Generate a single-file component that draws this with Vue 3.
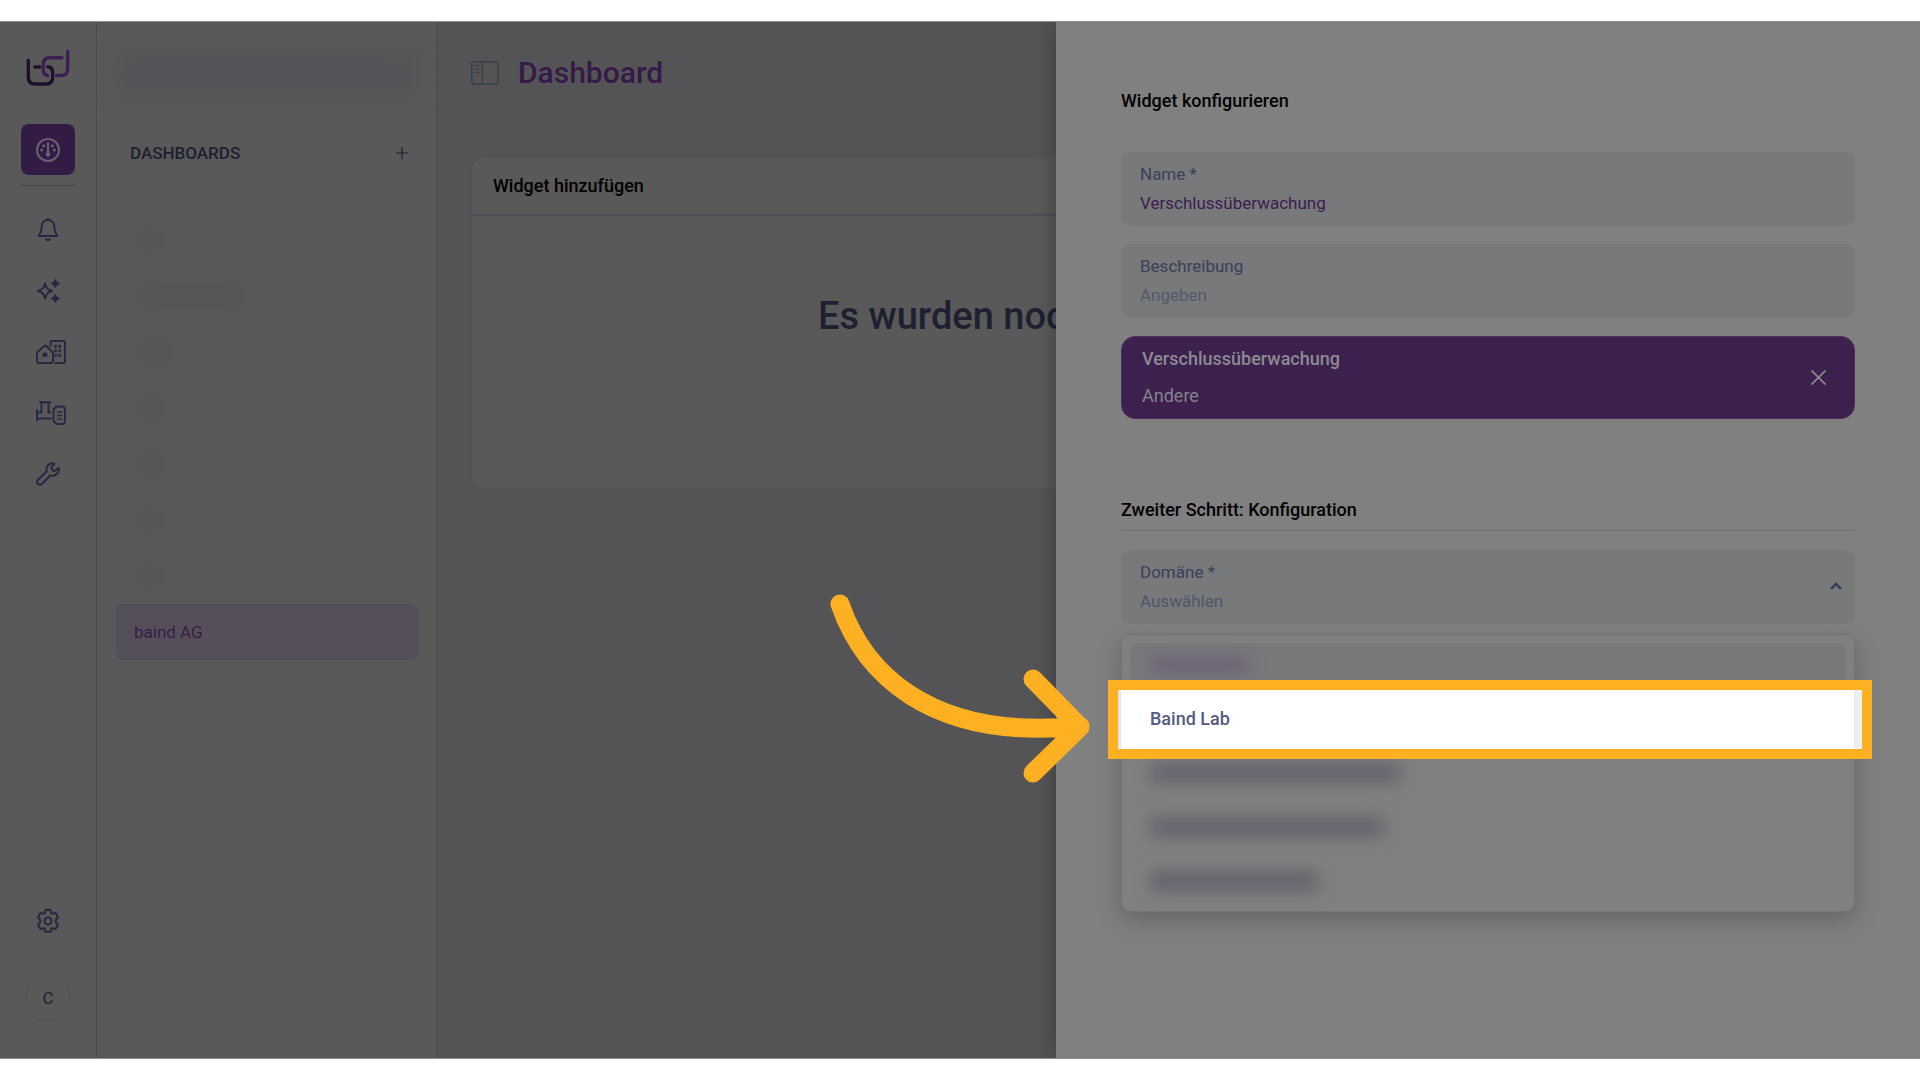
<script setup>
import { ref } from 'vue'

const name = ref('Verschlussüberwachung')
const description = ref('')
const domain = ref('')

const hiddenDashboards = [28, 110, 38, 30, 30, 28, 28]
const hiddenDomains = [250, 234, 168]
</script>

<template>
  <div class="page">
    <div class="stage">
      <nav class="rail" aria-label="Hauptnavigation">
        <a class="logo" href="#" aria-label="Startseite">
          <svg width="44" height="37" viewBox="0 0 44 37" fill="none" stroke-width="3.400" stroke-linecap="round">
            <path d="M36 8.800H24q-6.700 0-6.700 6.700v5q0 5 4.200 6M30.500 26.500H35q6.700 0 6.700-6.700V2.500" stroke="#3a1f50" />
            <path d="M2.300 11.500V28q0 7 7 7h10.200q7.200 0 7.200-7v-4.500q0-5.300-5-5.700M8.700 18h5" stroke="#1e0f2a" />
          </svg>
        </a>
        <button class="rail-btn active" type="button" aria-label="Dashboard">
          <svg width="24" height="24" viewBox="0 0 24 24" fill="none" stroke="currentColor">
            <circle cx="12" cy="12" r="11" stroke-width="2" />
            <path d="M12 5v10" stroke-width="2.200" stroke-linecap="round" />
            <circle cx="12" cy="16.500" r="2.300" fill="currentColor" stroke="none" />
            <g fill="currentColor" stroke="none">
              <circle cx="7.700" cy="7.700" r="1.500" /><circle cx="16.300" cy="7.700" r="1.500" />
              <circle cx="5.700" cy="12" r="1.500" /><circle cx="18.300" cy="12" r="1.500" />
            </g>
          </svg>
        </button>
        <hr class="rail-line" />
        <div class="rail-list">
          <button class="rail-btn" type="button" aria-label="Alarme">
            <svg width="24" height="24" viewBox="0 0 24 24" fill="none" stroke="currentColor" stroke-width="1.900" stroke-linejoin="round" stroke-linecap="round">
              <path d="M12 2c-4 0-6.300 3-6.300 6.500 0 5-1.700 7.300-3 9.500h18.600c-1.300-2.200-3-4.500-3-9.500C18.300 5 16 2 12 2zM12 1v1" />
              <path d="M9.200 21h5.600q-.800 2-2.800 2t-2.800-2z" fill="currentColor" stroke-width=".5" />
            </svg>
          </button>
          <button class="rail-btn" type="button" aria-label="Assistent">
            <svg width="24" height="24" viewBox="0 0 24 24" fill="currentColor">
              <path d="M9 4.500c1 4.500 2.500 6 7 7.500-4.500 1.500-6 3-7 7.500-1-4.500-2.500-6-7-7.500 4.500-1.500 6-3 7-7.500z" fill="none" stroke="currentColor" stroke-width="2" stroke-linejoin="round" />
              <path d="M19.300 0q.9 3.300 4.500 4.500-3.600 1.200-4.500 4.500-.9-3.300-4.500-4.500 3.600-1.200 4.500-4.500zM19.300 15q.9 3.300 4.500 4.500-3.600 1.200-4.500 4.500-.9-3.300-4.500-4.500 3.600-1.200 4.500-4.500z" stroke="currentColor" stroke-width=".6" />
            </svg>
          </button>
          <button class="rail-btn wide" type="button" aria-label="Gebäude">
            <svg width="30" height="24" viewBox="0 0 30 24" fill="none" stroke="currentColor" stroke-width="1.900" stroke-linejoin="round" stroke-linecap="round">
              <path d="M1 12.500l7.500-6.800q.8-.600 1.600 0l6.900 6.800V21q0 2-2 2H3q-2 0-2-2zM14.500 6V3q0-2 2-2H27q2 0 2 2v18q0 2-2 2h-7.500" />
              <path d="M7 13h4v3.500H7z" fill="currentColor" stroke-width=".5" />
              <path d="M19.500 6.200v.1M23.700 6.200v.1M19.500 10.800v.1M23.700 10.800v.1M19.800 15.300v.1M23.700 15.300v.1" stroke-width="2.800" stroke-linecap="square" />
            </svg>
          </button>
          <button class="rail-btn wide" type="button" aria-label="Anlagen">
            <svg width="30" height="24" viewBox="0 0 30 24" fill="none" stroke="currentColor" stroke-width="1.900" stroke-linejoin="round" stroke-linecap="round">
              <path d="M1 9v10.500M1 11.500h4.500V1.200M4 1.200h10.500M12.500 1.200V11.500h2M1 17.500h14" />
              <path d="M20.500 5.500H26q3 0 3 3V20q0 3-3 3h-5.500l-3-3V8.500z" />
              <path d="M21.500 11h4M21.500 14.500h4M21.500 18h4" stroke-width="1.400" />
            </svg>
          </button>
          <button class="rail-btn" type="button" aria-label="Werkzeuge">
            <svg width="24" height="24" viewBox="0 0 24 24" fill="none" stroke="currentColor" stroke-width="2" stroke-linejoin="round" stroke-linecap="round">
              <path d="M18.500 1.700C14 .2 9.700 3.500 10.600 8.400q.1.900-.6 1.600L1.800 18q-1.500 2 0 3.800 2 1.800 4 .2l7.700-7.800q.8-.8 1.700-.6C20.500 14.300 24 10 22.600 5.700l-3.200 3q-1.200.8-3-.8-1.500-1.700-.7-3z" />
            </svg>
          </button>
        </div>
        <div class="rail-foot">
          <button class="rail-btn" type="button" aria-label="Einstellungen">
            <svg width="24" height="24" viewBox="0 0 24 24" fill="none" stroke="currentColor" stroke-width="2" stroke-linejoin="round">
              <circle cx="12" cy="12" r="3.500" />
              <path d="M9 2.200q.2-1.200 1.500-1.200h3q1.300 0 1.500 1.200l.3 2 1 .6 2-.7q1.200-.4 1.800.7l1.500 2.600q.6 1.100-.3 1.900L19.800 10.600v2.800l1.500 1.300q.9.800.3 1.900l-1.500 2.600q-.6 1.100-1.800.7l-2-.7-1 .6-.3 2Q14.800 23 13.500 23h-3Q9.200 23 9 21.800l-.3-2-1-.6-2 .7q-1.200.4-1.800-.7l-1.500-2.600q-.6-1.100.3-1.900l1.500-1.300v-2.800L2.700 9.300q-.9-.8-.3-1.900l1.500-2.600q.6-1.100 1.800-.7l2 .7 1-.6z" />
            </svg>
          </button>
          <button class="avatar" type="button">C</button>
        </div>
      </nav>

      <aside class="panel">
        <div class="search-blur"></div>
        <header class="panel-head">
          <h2>DASHBOARDS</h2>
          <button class="add" type="button" aria-label="Dashboard hinzufügen">
            <svg width="12" height="12" viewBox="0 0 12 12" stroke="currentColor" stroke-width="1.200"><path d="M6 0v12M0 6h12" /></svg>
          </button>
        </header>
        <ul class="dash-list">
          <li v-for="(w, i) in hiddenDashboards" :key="i"><span class="smudge" :style="{ width: w + 'px' }"></span></li>
          <li><a class="current" href="#">baind AG</a></li>
        </ul>
      </aside>

      <main class="main">
        <header class="main-head">
          <svg width="28" height="24" viewBox="0 0 28 24" fill="none" stroke="#3a414b" stroke-width="1.600">
            <rect x=".8" y=".8" width="26.400" height="22.400" rx="2" />
            <path d="M11.300 1v22M3.500 4.500h5M3.500 8h5M3.500 11.500h5" />
          </svg>
          <h1>Dashboard</h1>
        </header>
        <section class="card">
          <h3>Widget hinzufügen</h3>
          <p>Es wurden noch</p>
        </section>
      </main>

      <form class="drawer" @submit.prevent>
        <h2>Widget konfigurieren</h2>
        <div class="fields">
          <div class="field">
            <label for="name">Name *</label>
            <input id="name" v-model="name" type="text" />
          </div>
          <div class="field">
            <label for="desc">Beschreibung</label>
            <input id="desc" v-model="description" type="text" placeholder="Angeben" />
          </div>
          <div class="choice">
            <div>
              <strong>Verschlussüberwachung</strong>
              <span>Andere</span>
            </div>
            <button type="button" aria-label="Auswahl entfernen">
              <svg width="15" height="15" viewBox="0 0 15 15" stroke="currentColor" stroke-width="1.700"><path d="M.5.5l14 14M14.500.5l-14 14" /></svg>
            </button>
          </div>
        </div>
        <h2 class="step">Zweiter Schritt: Konfiguration</h2>
        <div class="field domain">
          <label for="domain">Domäne *</label>
          <select id="domain" v-model="domain">
            <option value="">Auswählen</option>
            <option value="lab">Baind Lab</option>
          </select>
          <svg class="chevron" width="12" height="8" viewBox="0 0 12 8" fill="none" stroke="#353b52" stroke-width="2.400"><path d="M1 7l5-5 5 5" /></svg>
        </div>
        <ul class="menu" role="listbox" aria-label="Domäne">
          <li class="option hovered"><span class="smudge pink"></span></li>
          <li class="option spot">
            <div class="frame"></div>
            <button type="button" @click="domain = 'lab'">Baind Lab</button>
            <svg class="arrow" width="270" height="200" viewBox="0 0 270 200" fill="none" stroke="#feb023" stroke-width="19" stroke-linecap="round" stroke-linejoin="round">
              <path d="M20 14C42 78 105 152 260 136M213 89l47 48-47 46" />
            </svg>
          </li>
          <li v-for="(w, i) in hiddenDomains" :key="i" class="option"><span class="smudge dark" :style="{ width: w + 'px' }"></span></li>
        </ul>
      </form>
    </div>
  </div>
</template>

<style>
body {
  margin: 0;
  background: #fff;
}
</style>

<style scoped>
* {
  box-sizing: border-box;
}
.page {
  display: flex;
  min-height: 100vh;
  padding: 21px 0;
  font-family: Roboto, "Liberation Sans", sans-serif;
  font-size: 17px;
  line-height: 20px;
}
.stage {
  position: relative;
  display: flex;
  flex: 1;
  overflow: hidden;
  border: solid #8c8c8c;
  border-width: 1px 0;
  background: #545456;
}
h1, h2, h3, p, ul {
  margin: 0;
  padding: 0;
}
h1, h2, h3, .card p {
  font-weight: 500;
}
ul {
  list-style: none;
}
button, input, select {
  padding: 0;
  border: 0;
  background: none;
  font: inherit;
  color: inherit;
}
svg {
  display: block;
}

.rail {
  display: flex;
  flex-direction: column;
  width: 97px;
  padding: 27px 21px 37px;
  border-right: 1px solid #4c4b55;
  background: #595959;
  color: #252840;
}
.logo {
  margin: 0 5px 38px;
}
.rail-btn {
  display: flex;
  align-items: center;
  justify-content: center;
  width: 54px;
  height: 40px;
}
.rail-btn.wide {
  justify-content: flex-start;
  padding-left: 15px;
}
.rail-btn.active {
  height: 51px;
  border-radius: 8px;
  background: #331c44;
  color: #6a6070;
}
.rail-line {
  width: 54px;
  height: 1px;
  margin: 10px 0 24px;
  border: 0;
  background: #49494b;
}
.rail-list {
  display: grid;
  gap: 21px;
}
.rail-list .rail-btn {
  height: 40px;
}
.rail-foot {
  display: flex;
  flex-direction: column;
  gap: 34px;
  margin-top: auto;
}
.avatar {
  width: 46px;
  height: 46px;
  margin-left: 4px;
  border: 1px solid #525254;
  border-radius: 50%;
  color: #1e2030;
}

.panel {
  width: 341px;
  padding: 29px 17px 0 19px;
  border-right: 2px solid #4e4e54;
  background: #595959;
}
.search-blur {
  height: 46px;
  border-radius: 12px;
  background: #525457;
  filter: blur(10px);
}
.panel-head {
  display: flex;
  align-items: center;
  justify-content: space-between;
  margin: 45px 11px 48px 14px;
  color: #1d2030;
}
.panel-head h2 {
  font-size: 17px;
  line-height: 22px;
}
.dash-list li {
  display: flex;
  align-items: center;
  height: 56px;
  padding-left: 20px;
}
.dash-list li:last-child {
  padding: 0;
}
.smudge {
  height: 16px;
  border-radius: 6px;
  background: #525356;
  filter: blur(8px);
}
.current {
  flex: 1;
  padding: 18px;
  border-radius: 8px;
  background: #544f58;
  color: #3a1c4c;
  text-decoration: none;
}

.main {
  flex: 1;
  padding: 30px 34px 30px 33px;
}
.main-head {
  display: flex;
  align-items: center;
  gap: 19px;
  height: 41px;
}
.main-head h1 {
  font-size: 30px;
  line-height: 40px;
  color: #351a48;
}
.card {
  height: 332px;
  margin-top: 64px;
  border: 1px solid #525256;
  border-radius: 12px;
  background: #595959;
}
.card h3 {
  padding: 18px 21px 18px;
  border-bottom: 2px solid #4d4d53;
  font-size: 18px;
  color: #000;
}
.card p {
  padding: 77px 0 0 346px;
  font-size: 38px;
  line-height: 46px;
  color: #1d2030;
}

.drawer {
  position: absolute;
  inset: 0 0 0 auto;
  width: 45%;
  padding: 67px 65px 0;
  background: #808080;
  box-shadow: 0 0 20px rgba(0, 0, 0, 0.3);
}
.drawer h2 {
  font-size: 18px;
  line-height: 24px;
  color: #000;
}
.fields {
  display: grid;
  gap: 18px;
  margin-top: 39px;
}
.field {
  position: relative;
  display: flex;
  flex-direction: column;
  gap: 9px;
  height: 74px;
  padding: 12px 19px;
  border-radius: 9px;
  background: #77797b;
}
.field label {
  color: #3b3f58;
}
.field input, .field select {
  width: 100%;
  height: 20px;
  outline: 0;
  color: #3c1d50;
}
.field input::placeholder {
  color: #535a68;
  opacity: 1;
}
.field select {
  appearance: none;
  color: #50566a;
}
.chevron {
  position: absolute;
  top: 32px;
  right: 13px;
}
.choice {
  display: flex;
  align-items: center;
  justify-content: space-between;
  height: 83px;
  padding: 0 28px 0 20px;
  border: 1px solid #50305f;
  border-radius: 14px;
  background: #3c204e;
  color: #8d8b90;
}
.choice div {
  display: grid;
  gap: 17px;
  font-size: 18px;
}
.choice strong {
  font-weight: 500;
}
.choice span {
  color: #86818c;
}
.drawer .step {
  margin: 79px 0 19px;
  padding-bottom: 8px;
  border-bottom: 1px solid #717173;
}
.menu {
  display: grid;
  gap: 10px;
  margin-top: 10px;
  padding: 8px;
  border: 1px solid #747476;
  border-radius: 10px;
  background: #808080;
  box-shadow: 0 8px 22px rgba(50, 54, 64, 0.38);
}
.option {
  position: relative;
  display: flex;
  align-items: center;
  height: 44px;
  padding-left: 20px;
  border-radius: 8px;
}
.hovered {
  background: #77797b;
}
.pink {
  width: 98px;
  background: #6d6076;
}
.dark {
  height: 20px;
  background: #62626c;
}
.spot {
  z-index: 1;
}
.spot button {
  position: relative;
  font-size: 18px;
  font-weight: 500;
  color: #555a82;
}
.frame {
  position: absolute;
  inset: -17px -26px -18px -22px;
  border: 10px solid #feb023;
  background: linear-gradient(90deg, #e4e6ec 3px, #fff 3px, #fff calc(100% - 8px), #dde0ea calc(100% - 8px), #eceff2 calc(100% - 7px));
}
.arrow {
  position: absolute;
  top: -107px;
  left: -310px;
}
</style>
